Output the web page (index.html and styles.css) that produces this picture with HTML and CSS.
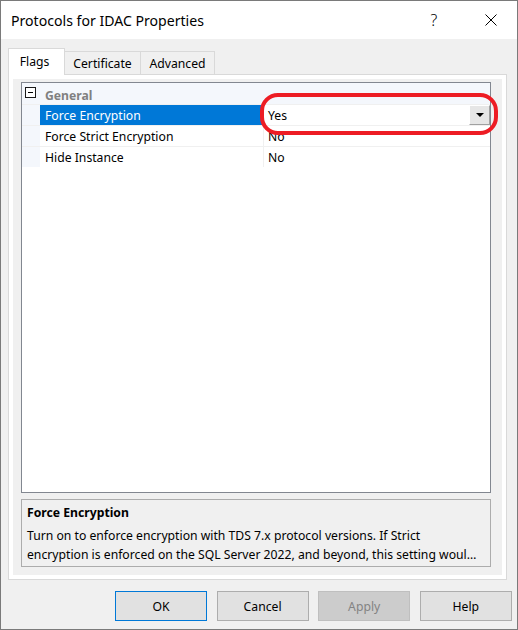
FILE: index.html
```html
<!DOCTYPE html>
<html>
<head>
<meta charset="utf-8">
<link rel="stylesheet" href="styles.css">
</head>
<body>
<div class="window">
  <div class="titlebar">
    <span class="title">Protocols for IDAC Properties</span>
    <span class="help">?</span>
    <span class="close">
      <svg width="12" height="12" viewBox="0 0 12 12"><path d="M0.5 0.5 L11.5 11.5 M11.5 0.5 L0.5 11.5" stroke="#000" stroke-width="1" fill="none"/></svg>
    </span>
  </div>
  <div class="tabs">
    <div class="tab active">Flags</div>
    <div class="tab tab-cert">Certificate</div>
    <div class="tab tab-adv">Advanced</div>
  </div>
  <div class="panel">
    <div class="page">
      <div class="grid">
        <div class="category">
          <span class="margin"><span class="expander"><span class="minus"></span></span></span>
          <span class="cat-label">General</span>
        </div>
        <div class="row selected">
          <span class="margin"></span>
          <span class="label">Force Encryption</span>
          <span class="value">Yes<span class="dd"><svg width="8" height="4" viewBox="0 0 8 4"><path d="M0 0 L8 0 L4 4 Z" fill="#000"/></svg></span></span>
        </div>
        <div class="row">
          <span class="margin"></span>
          <span class="label">Force Strict Encryption</span>
          <span class="value">No</span>
        </div>
        <div class="row">
          <span class="margin"></span>
          <span class="label">Hide Instance</span>
          <span class="value">No</span>
        </div>
        <div class="highlight"></div>
      </div>
      <div class="desc">
        <div class="desc-title">Force Encryption</div>
        <div class="desc-line">Turn on to enforce encryption with TDS 7.x protocol versions. If Strict</div>
        <div class="desc-line">encryption is enforced on the SQL Server 2022, and beyond, this setting woul…</div>
      </div>
    </div>
  </div>
  <div class="buttons">
    <div class="btn default">OK</div>
    <div class="btn">Cancel</div>
    <div class="btn disabled">Apply</div>
    <div class="btn">Help</div>
  </div>
</div>
</body>
</html>
```
FILE: styles.css
```css
body {
  margin: 0;
  width: 518px;
  height: 630px;
  overflow: hidden;
  font-family: "Noto Sans", "Open Sans", sans-serif;
  font-size: 12.2px;
  color: #000;
}

.window {
  box-sizing: border-box;
  width: 518px;
  height: 630px;
  border: 1px solid #7a7a7a;
  background: #f0f0f0;
  display: flex;
  flex-direction: column;
}

.titlebar {
  flex: none;
  height: 38px;
  background: #fff;
  display: flex;
  align-items: center;
}

.title {
  flex: 1;
  padding-left: 10px;
  font-size: 14.1px;
}

.help {
  width: 30px;
  text-align: center;
  font-size: 16px;
  font-weight: 300;
}

.close {
  width: 30px;
  margin-left: 27px;
  margin-right: 11px;
  display: flex;
  justify-content: center;
}

.tabs {
  flex: none;
  height: 35px;
  display: flex;
  align-items: flex-end;
  padding-left: 7px;
}

.tab {
  box-sizing: border-box;
  height: 23px;
  border: 1px solid #d9d9d9;
  border-bottom: none;
  border-left: none;
  display: flex;
  align-items: center;
  justify-content: center;
  background: #f0f0f0;
}

.tab.active {
  width: 57px;
  height: 27px;
  background: #fff;
  border-left: 1px solid #d9d9d9;
  margin-bottom: -1px;
  position: relative;
  z-index: 1;
  padding-bottom: 2px;
  padding-right: 4px;
}

.tab-cert { width: 76px; }
.tab-adv { width: 74px; }

.panel {
  flex: none;
  box-sizing: border-box;
  margin-left: 7px;
  width: 499px;
  height: 506px;
  border: 1px solid #d9d9d9;
  background: #fff;
  padding: 4px;
}

.page {
  box-sizing: border-box;
  height: 100%;
  background: #f0f0f0;
  padding: 3px 11px 8px 8px;
  display: flex;
  flex-direction: column;
}

.grid {
  box-sizing: border-box;
  height: 411px;
  border: 1px solid #828790;
  background: #fff;
  position: relative;
}

.category {
  height: 21px;
  background: #f4f7fc;
  display: flex;
  align-items: center;
}

.margin {
  width: 18px;
  flex: none;
  align-self: stretch;
  background: #f4f7fc;
  display: flex;
  align-items: center;
}

.expander {
  box-sizing: border-box;
  width: 11px;
  height: 11px;
  margin-left: 3px;
  margin-top: -2px;
  border: 1px solid #1a1a1a;
  display: flex;
  align-items: center;
  justify-content: center;
  background: #fff;
}

.minus {
  width: 5px;
  height: 1px;
  background: #000;
}

.cat-label {
  padding-left: 5px;
  padding-top: 3px;
  font-weight: bold;
  color: #808080;
}

.row {
  height: 21px;
  display: flex;
  box-sizing: border-box;
  border-top: 1px solid #f0f0f0;
}

.label {
  box-sizing: border-box;
  width: 223px;
  flex: none;
  padding-left: 5px;
  display: flex;
  align-items: center;
  white-space: nowrap;
}

.value {
  flex: 1;
  border-left: 1px solid #f0f0f0;
  padding-left: 4px;
  display: flex;
  align-items: center;
}

.selected .label {
  background: #0078d7;
  color: #fff;
}

.dd {
  box-sizing: border-box;
  margin-left: auto;
  width: 21px;
  height: 20px;
  background: #e6e6e6;
  border: 1px solid;
  border-color: #fff #a0a0a0 #a0a0a0 #fff;
  display: flex;
  align-items: center;
  justify-content: center;
}

.highlight {
  position: absolute;
  box-sizing: border-box;
  left: 238px;
  top: 10px;
  width: 238px;
  height: 42px;
  border: 4px solid #ed1c24;
  border-radius: 18px;
}

.desc {
  box-sizing: border-box;
  margin-top: 6px;
  height: 68px;
  border: 1px solid #acacac;
  padding: 3px 5px 0 5px;
  line-height: 19px;
  white-space: nowrap;
  overflow: hidden;
}

.desc-title {
  font-weight: bold;
  margin-bottom: 4px;
}

.buttons {
  display: flex;
  gap: 9.6px;
  padding-left: 114px;
  margin-top: 11px;
}

.btn {
  box-sizing: border-box;
  width: 92px;
  height: 30px;
  background: #e1e1e1;
  border: 1px solid #adadad;
  display: flex;
  align-items: center;
  justify-content: center;
}

.btn.default {
  border-color: #0078d7;
}

.btn.disabled {
  background: #cccccc;
  border-color: #bfbfbf;
  color: #838383;
}
```
